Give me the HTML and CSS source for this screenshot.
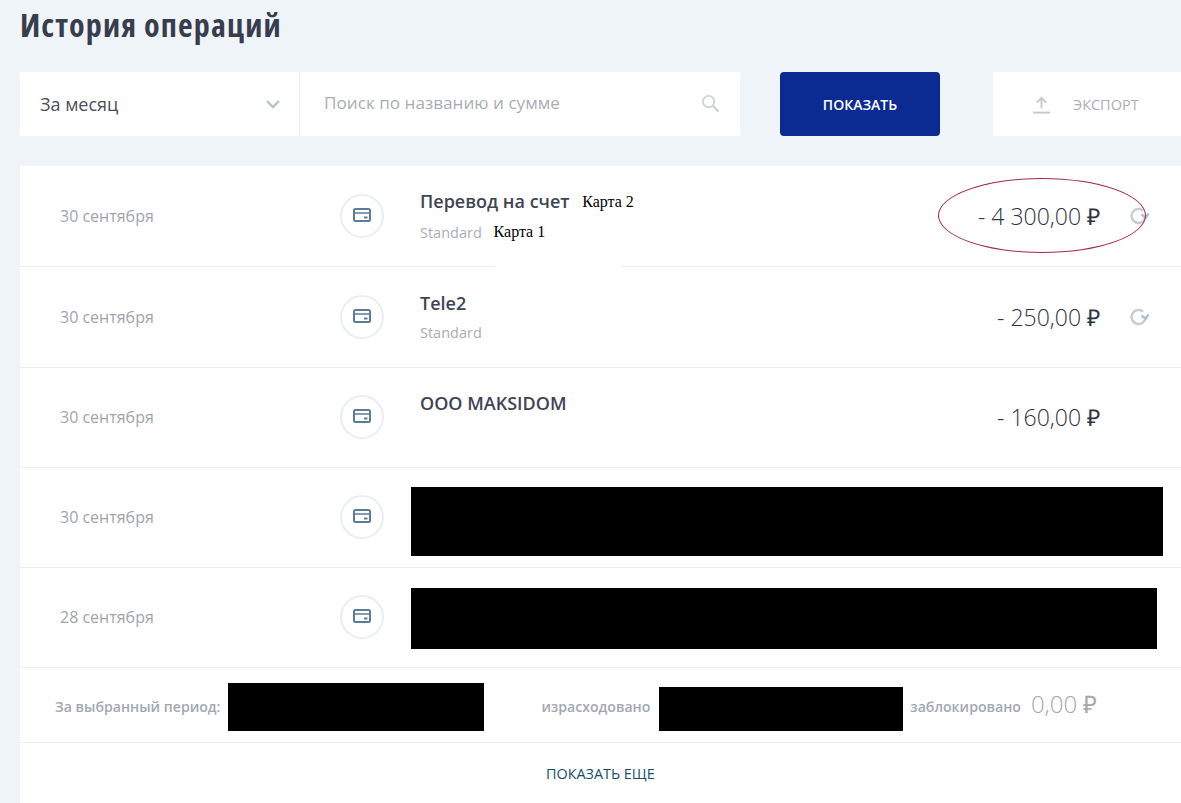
FILE: index.html
```html
<!DOCTYPE html>
<html lang="ru">
<head>
  <meta charset="UTF-8">
  <title>История операций</title>
  <link rel="stylesheet" href="styles.css">
</head>
<body>
  <h1 class="title">История операций</h1>

  <!-- Фильтры -->
  <div class="toolbar">
    <div class="filter">
      <div class="period">
        <span>За месяц</span>
        <svg class="chevron" viewBox="0 0 16 10"><path d="M2 2l6 6 6-6" fill="none" stroke="#b4c1ce" stroke-width="2.4"/></svg>
      </div>
      <div class="search">
        <span class="search-text">Поиск по названию и сумме</span>
        <svg class="search-icon" viewBox="0 0 20 20"><circle cx="8" cy="8" r="6" fill="none" stroke="#d0d3d6" stroke-width="2"/><path d="M12.5 12.5l6 6" stroke="#d0d3d6" stroke-width="2.6"/></svg>
      </div>
    </div>
    <button class="show">ПОКАЗАТЬ</button>
    <div class="export">
      <svg class="upload" viewBox="0 0 20 20"><path d="M10 14V3M5 8l5-5 5 5" fill="none" stroke="#c3c9cf" stroke-width="2"/><path d="M1 18.500h18" stroke="#c3c9cf" stroke-width="2"/></svg>
      <span>ЭКСПОРТ</span>
    </div>
  </div>

  <!-- Список операций -->
  <div class="list">
    <div class="row row-tall">
      <div class="date">30 сентября</div>
      <div class="circle"><svg class="card" viewBox="0 0 18 14"><rect x="1" y="1" width="16" height="12" rx="1.500" fill="none" stroke="#5b7b96" stroke-width="2"/><path d="M1 5h16" stroke="#5b7b96" stroke-width="1.500"/><path d="M11 9.500h3.500" stroke="#5b7b96" stroke-width="2"/></svg></div>
      <div class="info">
        <div class="name">Перевод на счет <span class="note note-two">Карта 2</span></div>
        <div class="sub">Standard <span class="note note-one">Карта 1</span></div>
      </div>
      <div class="amount">- 4 300,00 ₽</div>
      <svg class="repeat" viewBox="0 0 20 20"><path d="M16.500 10a7 7 0 1 1-2.400-5.300" fill="none" stroke="#c5ccd2" stroke-width="2.400"/><path d="M19.800 7.500l-3.300 4-4-3" fill="none" stroke="#a9bfd0" stroke-width="2.400"/></svg>
      <div class="ellipse"></div>
      <div class="patch"></div>
    </div>
    <div class="row row-tall">
      <div class="date">30 сентября</div>
      <div class="circle"><svg class="card" viewBox="0 0 18 14"><rect x="1" y="1" width="16" height="12" rx="1.500" fill="none" stroke="#5b7b96" stroke-width="2"/><path d="M1 5h16" stroke="#5b7b96" stroke-width="1.500"/><path d="M11 9.500h3.500" stroke="#5b7b96" stroke-width="2"/></svg></div>
      <div class="info">
        <div class="name">Tele2</div>
        <div class="sub">Standard</div>
      </div>
      <div class="amount">- 250,00 ₽</div>
      <svg class="repeat" viewBox="0 0 20 20"><path d="M16.500 10a7 7 0 1 1-2.400-5.300" fill="none" stroke="#c5ccd2" stroke-width="2.400"/><path d="M19.800 7.500l-3.300 4-4-3" fill="none" stroke="#a9bfd0" stroke-width="2.400"/></svg>
    </div>
    <div class="row">
      <div class="date">30 сентября</div>
      <div class="circle"><svg class="card" viewBox="0 0 18 14"><rect x="1" y="1" width="16" height="12" rx="1.500" fill="none" stroke="#5b7b96" stroke-width="2"/><path d="M1 5h16" stroke="#5b7b96" stroke-width="1.500"/><path d="M11 9.500h3.500" stroke="#5b7b96" stroke-width="2"/></svg></div>
      <div class="info">
        <div class="name">ООО MAKSIDOM</div>
        <div class="sub">&nbsp;</div>
      </div>
      <div class="amount">- 160,00 ₽</div>
      <div class="repeat"></div>
    </div>
    <div class="row">
      <div class="date">30 сентября</div>
      <div class="circle"><svg class="card" viewBox="0 0 18 14"><rect x="1" y="1" width="16" height="12" rx="1.500" fill="none" stroke="#5b7b96" stroke-width="2"/><path d="M1 5h16" stroke="#5b7b96" stroke-width="1.500"/><path d="M11 9.500h3.500" stroke="#5b7b96" stroke-width="2"/></svg></div>
      <div class="mask mask-four"></div>
    </div>
    <div class="row">
      <div class="date">28 сентября</div>
      <div class="circle"><svg class="card" viewBox="0 0 18 14"><rect x="1" y="1" width="16" height="12" rx="1.500" fill="none" stroke="#5b7b96" stroke-width="2"/><path d="M1 5h16" stroke="#5b7b96" stroke-width="1.500"/><path d="M11 9.500h3.500" stroke="#5b7b96" stroke-width="2"/></svg></div>
      <div class="mask mask-five"></div>
    </div>

    <!-- Итоги -->
    <div class="summary">
      <span class="label">За выбранный период:</span>
      <div class="mask mask-total"></div>
      <span class="label label-spent">израсходовано</span>
      <div class="mask mask-spent"></div>
      <span class="label label-blocked">заблокировано</span>
      <span class="blocked">0,00 ₽</span>
    </div>
    <div class="more">ПОКАЗАТЬ ЕЩЕ</div>
  </div>
</body>
</html>
```

FILE: styles.css
```css
* {
  margin: 0;
  padding: 0;
  box-sizing: border-box;
}

body {
  height: 803px;
  padding-left: 20px;
  background: #eff4f8;
  overflow: hidden;
  font-family: 'Open Sans', sans-serif;
}

.title {
  height: 72px;
  padding-top: 5px;
  font-size: 32px;
  line-height: 40px;
  font-weight: 700;
  font-stretch: 85%;
  letter-spacing: 1.150px;
  color: #383d4e;
}

.toolbar {
  display: flex;
  height: 64px;
}

.filter {
  display: flex;
  width: 720px;
  background: #fff;
  border-radius: 2px;
}

.period {
  display: flex;
  align-items: center;
  justify-content: space-between;
  width: 280px;
  padding: 0 18px 0 20px;
  border-right: 1px solid #e8edf1;
  font-size: 18px;
  color: #4a4d58;
}

.chevron {
  width: 16px;
  height: 10px;
}

.search {
  display: flex;
  align-items: center;
  justify-content: space-between;
  flex: 1;
  padding: 0 20px 2px 24px;
  font-size: 17.150px;
  color: #a8adb5;
}

.search-text {
  margin-bottom: 2px;
}

.search-icon {
  width: 19px;
  height: 19px;
}

.show {
  width: 160px;
  margin-left: 40px;
  border: 0;
  border-radius: 4px;
  background: #0b2a92;
  color: #fff;
  font-family: inherit;
  font-size: 14px;
  font-weight: 600;
}

.export {
  display: flex;
  align-items: center;
  gap: 22px;
  width: 188px;
  margin-left: 53px;
  padding-left: 39px;
  background: #fff;
  font-size: 14.500px;
  font-weight: 500;
  color: #a9afb8;
}

.upload {
  width: 19px;
  height: 19px;
}

.list {
  margin-top: 30px;
  background: #fff;
}

.row {
  position: relative;
  display: flex;
  align-items: center;
  height: 100px;
  padding: 0 0 1px 40px;
  border-bottom: 1px solid #e9edf0;
}

.row-tall {
  height: 101px;
  padding-bottom: 0;
}

.date {
  width: 280px;
  font-size: 16px;
  color: #9fa5ad;
}

.circle {
  display: flex;
  align-items: center;
  justify-content: center;
  width: 44px;
  height: 44px;
  border: 2px solid #e9eef2;
  border-radius: 50%;
}

.card {
  width: 18px;
  height: 14px;
  margin: -2px 0 0 -1px;
}

.info {
  flex: 1;
  margin: 0 0 1px 36px;
}

.name {
  font-size: 18px;
  line-height: 24px;
  font-weight: 600;
  color: #3f4454;
}

.sub {
  margin-top: 8px;
  font-size: 14.500px;
  line-height: 20px;
  color: #a8adb5;
}

.note {
  position: relative;
  top: -1px;
  font-family: 'Liberation Serif', serif;
  font-size: 16px;
  font-weight: 400;
  color: #000;
}

.note-two {
  margin-left: 8px;
}

.note-one {
  margin-left: 8px;
}

.amount {
  font-size: 23px;
  font-weight: 300;
  color: #2f3340;
}

.repeat {
  width: 20px;
  height: 20px;
  margin: 0 32px 0 29px;
}

/* красный овал и белая заплатка поверх скриншота */
.ellipse {
  position: absolute;
  left: 918px;
  top: 12px;
  width: 208px;
  height: 75px;
  border: 1px solid #a82a45;
  border-radius: 50%;
}

.patch {
  position: absolute;
  left: 475px;
  bottom: -2px;
  width: 127px;
  height: 4px;
  background: #fff;
}

.mask {
  flex: none;
  background: #000;
}

.mask-four {
  width: 752px;
  height: 69px;
  margin: 9px 0 0 27px;
}

.mask-five {
  width: 746px;
  height: 61px;
  margin: 3px 0 0 27px;
}

.summary {
  display: flex;
  align-items: center;
  height: 75px;
  padding-left: 35px;
  border-bottom: 1px solid #e9edf0;
  font-size: 14.100px;
  font-weight: 600;
  color: #a2a8b0;
}

.label {
  margin-top: 2px;
}

.mask-total {
  width: 256px;
  height: 48px;
  margin: 4px 0 0 8px;
}

.label-spent {
  margin-left: 57px;
}

.mask-spent {
  width: 244px;
  height: 44px;
  margin: 8px 0 0 9px;
}

.label-blocked {
  margin-left: 7px;
}

.blocked {
  margin: 0 0 3px 10px;
  font-size: 24px;
  font-weight: 300;
  color: #a2a8b0;
}

.more {
  height: 61px;
  margin-left: 526px;
  line-height: 61px;
  font-size: 14.400px;
  font-weight: 400;
  color: #17506e;
}
```
